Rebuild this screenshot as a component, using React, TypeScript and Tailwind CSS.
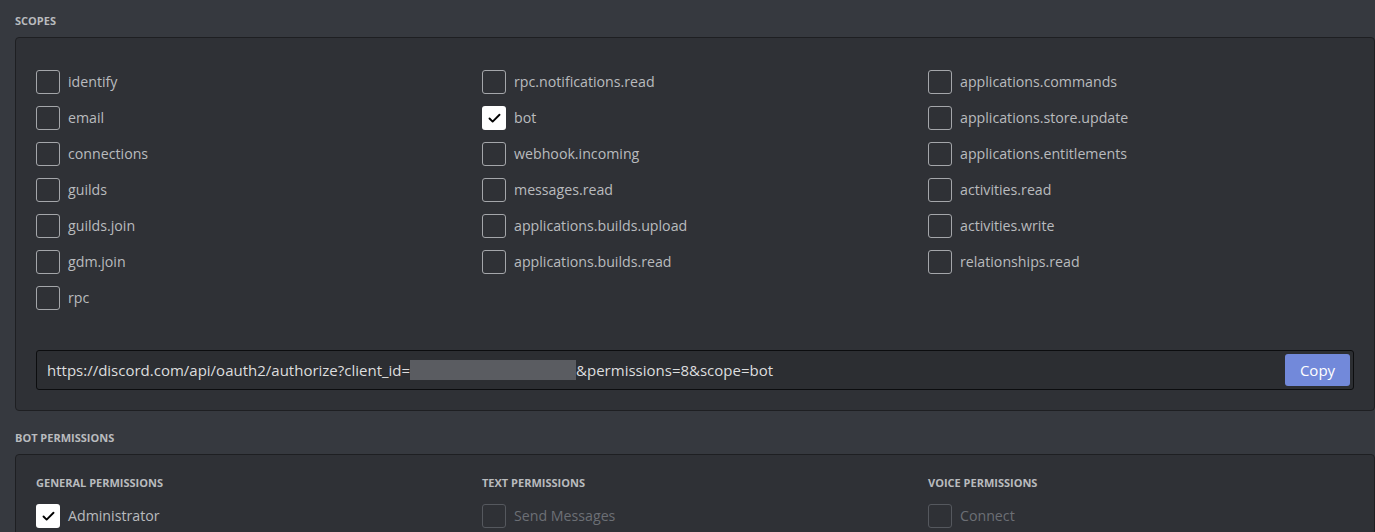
import { Check } from 'lucide-react';

const scopeColumns: string[][] = [
    ['identify', 'email', 'connections', 'guilds', 'guilds.join', 'gdm.join', 'rpc'],
    [
        'rpc.notifications.read',
        'bot',
        'webhook.incoming',
        'messages.read',
        'applications.builds.upload',
        'applications.builds.read',
    ],
    [
        'applications.commands',
        'applications.store.update',
        'applications.entitlements',
        'activities.read',
        'activities.write',
        'relationships.read',
    ],
];

const checkedScopes = ['bot'];

function Checkbox({ label, checked, disabled }: { label: string; checked?: boolean; disabled?: boolean }) {
    return (
        <label className="flex items-center h-6 gap-2 cursor-pointer">
            {checked ? (
                <span className="w-6 h-6 rounded-[3px] bg-white flex items-center justify-center">
                    <Check className="w-[15px] h-[15px] text-black" strokeWidth={3} />
                </span>
            ) : (
                <span
                    className={
                        disabled
                            ? 'w-6 h-6 rounded-[3px] border border-[#55585e]'
                            : 'w-6 h-6 rounded-[3px] border border-[#a4a6aa]'
                    }
                />
            )}
            <span
                className={
                    disabled
                        ? 'text-[14.2px] leading-6 -mt-[1px] text-[#6c6f75]'
                        : 'text-[14.2px] leading-6 -mt-[1px] text-[#b9bbbe]'
                }
            >
                {label}
            </span>
        </label>
    );
}

function SectionTitle({ children }: { children: React.ReactNode }) {
    return <h3 className="text-[11px] font-bold uppercase text-[#b9bbbe] leading-none">{children}</h3>;
}

export default function App() {
    return (
        <div
            className="w-[1375px] h-[532px] overflow-hidden bg-[#36393f] pl-[15px] pt-[15px]"
            style={{ fontFamily: '"Open Sans", "Liberation Sans", sans-serif' }}
        >
            {/* Scopes */}
            <SectionTitle>Scopes</SectionTitle>
            <div className="mt-[11px] w-[1360px] rounded-[4px] border border-[#1e1f22] bg-[#2f3136] px-5 pt-[32px] pb-5">
                <div className="grid grid-cols-[446px_446px_1fr]">
                    {scopeColumns.map((col, i) => (
                        <div key={i} className="flex flex-col gap-3">
                            {col.map(s => (
                                <Checkbox key={s} label={s} checked={checkedScopes.includes(s)} />
                            ))}
                        </div>
                    ))}
                </div>

                <div className="mt-10 h-10 flex items-center rounded-[3px] border border-[#0c0d0f] bg-[#2c2e32] pl-[10px] pr-[3px]">
                    <span className="text-[15px] text-[#dcddde] flex items-center whitespace-nowrap">
                        https://discord.com/api/oauth2/authorize?client_id=
                        <span className="inline-block w-[166px] h-[20px] bg-[#5a5c61]" />
                        &amp;permissions=8&amp;scope=bot
                    </span>
                    <button className="ml-auto h-8 w-[65px] rounded-[3px] bg-[#7289da] text-[15px] text-white">
                        Copy
                    </button>
                </div>
            </div>

            {/* Bot permissions */}
            <div className="mt-[21px]">
                <SectionTitle>Bot Permissions</SectionTitle>
            </div>
            <div className="mt-[11px] w-[1360px] h-[120px] rounded-[4px] border border-[#1e1f22] bg-[#2f3136] px-5 pt-[22px]">
                <div className="grid grid-cols-[446px_446px_1fr]">
                    <div>
                        <SectionTitle>General Permissions</SectionTitle>
                        <div className="mt-[16px]">
                            <Checkbox label="Administrator" checked />
                        </div>
                    </div>
                    <div>
                        <SectionTitle>Text Permissions</SectionTitle>
                        <div className="mt-[16px]">
                            <Checkbox label="Send Messages" disabled />
                        </div>
                    </div>
                    <div>
                        <SectionTitle>Voice Permissions</SectionTitle>
                        <div className="mt-[16px]">
                            <Checkbox label="Connect" disabled />
                        </div>
                    </div>
                </div>
            </div>
        </div>
    );
}
